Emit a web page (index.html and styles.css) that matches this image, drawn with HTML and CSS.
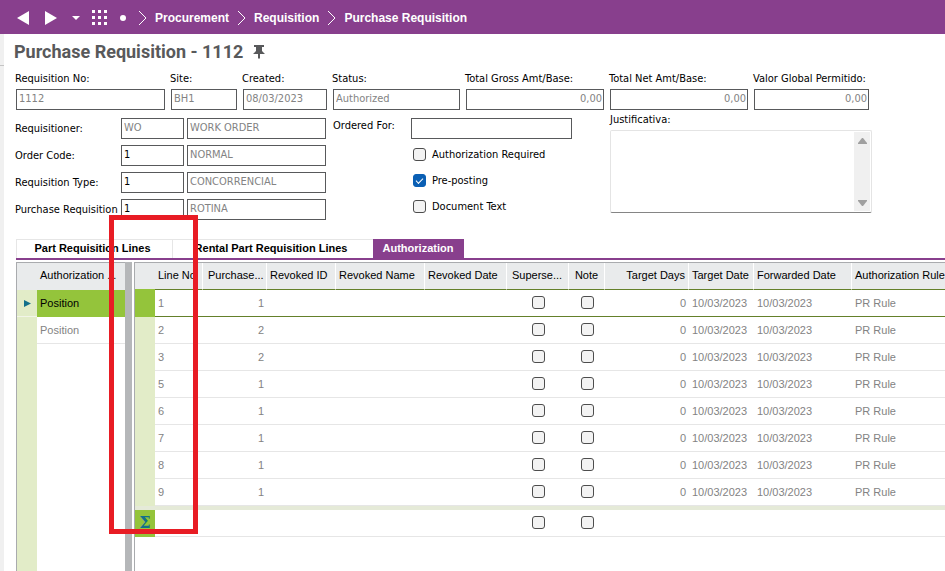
FILE: index.html
```html
<!DOCTYPE html>
<html lang="en">
<head>
<meta charset="utf-8">
<title>Purchase Requisition - 1112</title>
<link rel="stylesheet" href="styles.css">
</head>
<body>
<header class="topbar">
  <button class="nav-btn" aria-label="Back"><svg width="12" height="14" viewBox="0 0 12 14"><path d="M12 0V14L0 7Z"/></svg></button>
  <button class="nav-btn" aria-label="Forward"><svg width="12" height="14" viewBox="0 0 12 14"><path d="M0 0V14L12 7Z"/></svg></button>
  <button class="nav-btn" aria-label="History"><svg width="8" height="4" viewBox="0 0 8 4"><path d="M0 0H8L4 4Z"/></svg></button>
  <button class="nav-btn" aria-label="Apps"><svg width="15" height="15" viewBox="0 0 15 15"><path d="M0 0h3v3H0zM6 0h3v3H6zM12 0h3v3h-3zM0 6h3v3H0zM6 6h3v3H6zM12 6h3v3h-3zM0 12h3v3H0zM6 12h3v3H6zM12 12h3v3h-3z"/></svg></button>
  <span class="dot"></span>
  <nav class="crumbs" aria-label="Breadcrumb">
    <svg class="chev" width="9" height="16" viewBox="0 0 9 16"><path d="M1 1L8 8L1 15"/></svg>
    <a href="#procurement">Procurement</a>
    <svg class="chev" width="9" height="16" viewBox="0 0 9 16"><path d="M1 1L8 8L1 15"/></svg>
    <a href="#requisition">Requisition</a>
    <svg class="chev" width="9" height="16" viewBox="0 0 9 16"><path d="M1 1L8 8L1 15"/></svg>
    <a href="#purchase-requisition">Purchase Requisition</a>
  </nav>
</header>
<div class="body">
  <div class="gutter"><div class="gutter-top"></div></div>
  <main class="page">
    <div class="title-row">
      <h1>Purchase Requisition - 1112</h1>
      <svg width="12" height="14" viewBox="0 0 12 14"><path d="M1 0H11V2H9V6L12 9H7V13L6 14L5 13V9H0L3 6V2H1Z" fill="#58595b"/></svg>
    </div>

    <form class="form">
      <div class="summary">
        <div class="field"><label for="no">Requisition No:</label><input id="no" value="1112" readonly></div>
        <div class="field"><label for="site">Site:</label><input id="site" value="BH1" readonly></div>
        <div class="field"><label for="created">Created:</label><input id="created" value="08/03/2023" readonly></div>
        <div class="field"><label for="status">Status:</label><input id="status" value="Authorized" readonly></div>
        <div class="field"><label for="gross">Total Gross Amt/Base:</label><input id="gross" class="num" value="0,00" readonly></div>
        <div class="field"><label for="net">Total Net Amt/Base:</label><input id="net" class="num" value="0,00" readonly></div>
        <div class="field"><label for="valor">Valor Global Permitido:</label><input id="valor" class="num" value="0,00" readonly></div>
      </div>
      <div class="details">
        <div class="codes">
          <label for="requisitioner">Requisitioner:</label><input id="requisitioner" value="WO" readonly><input class="name" aria-label="Requisitioner name" value="WORK ORDER" readonly>
          <label for="order">Order Code:</label><input id="order" class="edit" value="1"><input class="name" aria-label="Order code name" value="NORMAL" readonly>
          <label for="type">Requisition Type:</label><input id="type" class="edit" value="1"><input class="name" aria-label="Requisition type name" value="CONCORRENCIAL" readonly>
          <label for="prf">Purchase Requisition F</label><input id="prf" class="edit" value="1"><input class="name" aria-label="Purchase requisition name" value="ROTINA" readonly>
        </div>
        <div class="options">
          <div class="ordered"><label for="for">Ordered For:</label><input id="for" class="edit"></div>
          <label class="check"><input type="checkbox">Authorization Required</label>
          <label class="check"><input type="checkbox" checked>Pre-posting</label>
          <label class="check"><input type="checkbox">Document Text</label>
        </div>
        <div class="just">
          <label for="just">Justificativa:</label>
          <div class="memo">
            <textarea id="just"></textarea>
            <div class="scroll">
              <svg width="9" height="6" viewBox="0 0 9 6"><path d="M4 0H5L9 5V6H0V5Z"/></svg>
              <svg width="9" height="6" viewBox="0 0 9 6"><path d="M4 6H5L9 1V0H0V1Z"/></svg>
            </div>
          </div>
        </div>
      </div>
    </form>

    <div class="tabs" role="tablist">
      <button role="tab" class="tab">Part Requisition Lines</button>
      <button role="tab" class="tab tab-wide">Rental Part Requisition Lines</button>
      <button role="tab" class="tab active" aria-selected="true">Authorization</button>
    </div>

    <div class="panes">
      <section class="pane pane-left">
        <table>
          <colgroup><col class="c-mark"><col></colgroup>
          <thead><tr><th></th><th>Authorization ...</th></tr></thead>
          <tbody>
            <tr class="current"><td class="mark"><svg width="7" height="7" viewBox="0 0 7 7"><path d="M0 0L7 3.500L0 7Z" fill="#12708a"/></svg></td><td>Position</td></tr>
            <tr><td class="mark"></td><td>Position</td></tr>
          </tbody>
        </table>
        <div class="mark-fill"></div>
      </section>
      <div class="splitter"></div>
      <section class="pane pane-right">
        <table>
          <colgroup><col class="c-mark"><col class="c-line"><col class="c-purch"><col class="c-id"><col class="c-name"><col class="c-date"><col class="c-sup"><col class="c-note"><col class="c-days"><col class="c-tdate"><col class="c-fdate"><col></colgroup>
          <thead><tr><th></th><th>Line No</th><th class="pad">Purchase...</th><th>Revoked ID</th><th>Revoked Name</th><th>Revoked Date</th><th class="pad">Superse...</th><th class="mid">Note</th><th class="num">Target Days</th><th>Target Date</th><th>Forwarded Date</th><th>Authorization Rule</th></tr></thead>
          <tbody id="lines"></tbody>
        </table>
      </section>
    </div>
    <div class="highlight"></div>
  </main>
</div>
<script src="lines.js"></script>
</body>
</html>
```

FILE: styles.css
```css
* { box-sizing: border-box; }
body {
  margin: 0;
  min-height: 100vh;
  display: flex;
  flex-direction: column;
  background: #fff;
  color: #000;
  font: 11px/15px "DejaVu Sans Condensed", Tahoma, sans-serif;
  overflow: hidden;
}
button, input, textarea { font: inherit; color: inherit; margin: 0; }

.topbar {
  height: 34px;
  padding: 1px 0 0 17px;
  display: flex;
  align-items: center;
  background: #883f8d;
  color: #fff;
  font: bold 12px/16px "Liberation Sans", Arial, sans-serif;
}
.nav-btn { display: flex; padding: 0; border: 0; background: none; margin-right: 16px; }
.nav-btn svg { fill: #fff; }
.nav-btn:nth-child(3) { margin-right: 12px; margin-left: -1px; }
.nav-btn:nth-child(4) { margin-right: 13px; }
.dot { width: 6px; height: 6px; border-radius: 50%; background: #fff; margin-right: 12px; }
.crumbs { display: flex; align-items: center; gap: 8px; }
.crumbs a { color: #fff; text-decoration: none; }
.chev path { fill: none; stroke: #fff; stroke-width: 1; }

.body { flex: 1; display: flex; }
.gutter { width: 4px; background: #f0f0f0; }
.gutter-top { height: 32px; border-bottom: 1px solid #c4c4c4; }
.page { flex: 1; min-width: 0; padding-left: 12px; display: flex; flex-direction: column; position: relative; }

.title-row { display: flex; align-items: center; gap: 10px; height: 36px; }
h1 { margin: 0 0 0 -2px; color: #58595b; font: bold 18px/24px Roboto, "Franklin Gothic Demi Cond", sans-serif; }

.form input:not([type]), .memo {
  border: 1px solid #58595b;
  background: #fff;
}
.form input:not([type]) {
  width: 100%;
  min-width: 0;
  height: 21px;
  padding: 0 1px 2px 2px;
  color: #838383;
  outline: 0;
}
.form input.edit:not([type]) { color: #000; }
.form input.num { text-align: right; }
.summary { display: grid; grid-template-columns: 149px 66px 84px 127px 138px 138px 115px; gap: 6px; }
.field { display: flex; flex-direction: column; gap: 3px; white-space: nowrap; }
.field label { margin-left: -1px; }
.form { padding-top: 1px; }

.details { display: grid; grid-template-columns: 317px 277px 262px; }
.codes { display: grid; grid-template-columns: 105px 63px 142px; row-gap: 6px; align-items: center; align-self: start; white-space: nowrap; padding-top: 8px; }
.codes label { margin-left: -1px; }
.codes input { position: relative; }
.codes .name { justify-self: end; max-width: 139px; }
.options { display: flex; flex-direction: column; gap: 5px; padding-top: 8px; }
.ordered { display: grid; grid-template-columns: 78px 161px; }
.check { display: flex; align-items: center; gap: 6px; height: 21px; padding-left: 80px; }
.just { display: flex; flex-direction: column; gap: 3px; padding-top: 2px; }
.memo { display: flex; height: 83px; border-color: #e4e4e4; border-bottom-color: #858585; border-radius: 2px; padding: 1px; }
textarea { flex: 1; min-width: 0; border: 0; padding: 2px; resize: none; outline: 0; background: transparent; }
.scroll { width: 16px; background: #f0f0f0; display: flex; flex-direction: column; align-items: center; justify-content: space-between; padding: 6px 0 5px; }
.scroll svg { fill: #a0a0a0; }

input[type="checkbox"] {
  appearance: none;
  flex: none;
  width: 13px;
  height: 13px;
  border: 1px solid #4d4d4d;
  border-radius: 3px;
  background: #f3f3f3;
}
input[type="checkbox"]:checked {
  border-color: #0a5fb4;
  background: #0a5fb4;
  display: flex;
  align-items: center;
  justify-content: center;
}
input[type="checkbox"]:checked::before {
  content: "";
  width: 6px;
  height: 3px;
  margin-bottom: 2px;
  border: solid #fff;
  border-width: 0 0 1px 1px;
  transform: rotate(-45deg);
}

.tabs { display: flex; margin-top: 19px; border-bottom: 2px solid #883f8d; }
.tab {
  height: 19px;
  width: 156px;
  padding: 0 4px 1px 0;
  border: 1px solid #e6e6e6;
  border-width: 1px 0 0 1px;
  background: #fff;
  white-space: nowrap;
  font: bold 11px/15px "Liberation Sans", Arial, sans-serif;
}
.tab-wide { width: 201px; }
.tab.active { width: 91px; padding-right: 1px; border: 0; background: #883f8d; color: #fff; }

.panes { flex: 1; display: flex; margin-top: 2px; font: 11px/15px "Liberation Sans", Arial, sans-serif; }
.pane { border: solid #a9abae; border-width: 1px 0 0 1px; display: flex; flex-direction: column; min-width: 0; overflow: hidden; }
.pane-left { width: 109px; }
.pane-right { flex: 1; }
.splitter { width: 7px; background: #b5b7b9; margin-right: 2px; }
table { width: 100%; table-layout: fixed; border-collapse: separate; border-spacing: 0; }
.c-mark { width: 20px; }
.c-line { width: 48px; }
.c-purch { width: 64px; }
.c-id { width: 69px; }
.c-name { width: 89px; }
.c-date { width: 82px; }
.c-sup { width: 62px; }
.c-note { width: 36px; }
.c-days { width: 84px; }
.c-tdate { width: 65px; }
.c-fdate { width: 98px; }
th, td { height: 27px; padding: 0 3px; text-align: left; font-weight: normal; white-space: nowrap; overflow: hidden; }
th { padding-bottom: 2px; background: #e9ebec; border-right: 1px solid #fff; border-bottom: 1px solid #e9ebec; }
th:first-child, .pane th:last-child { border-right: 0; }
.pane th:last-child { padding-right: 0; }
th.pad { padding-left: 5px; }
td { color: #838383; border-bottom: 1px solid #e6e6e6; }
td.mark { padding: 0; background: #e2ecc8; border-bottom-color: #e2ecc8; text-align: center; }
.num { text-align: right; }
.mid { text-align: center; }
td.mid { padding-bottom: 2px; }
td input[type="checkbox"] { display: block; margin: 0 auto; }
.pane-left .current td:last-child { background: #94c43b; color: #000; border-color: #94c43b; }
.pane-left .current td.mark { border-bottom-color: #f2f5e8; }
.mark-fill { flex: 1; width: 20px; background: #e2ecc8; }
.pane-right thead th { border-bottom-color: #64802a; }
.pane-right thead th:first-child { border-bottom-color: #94c43b; }
.pane-right .current td { border-bottom-color: #64802a; }
.pane-right .current td.mark, .sum td.mark { background: #94c43b; border-bottom-color: #94c43b; }
.band td { height: 4px; padding: 0; background: #e5ead8; border: 0; line-height: 0; }
.sum td.mark { color: #12708a; font: bold 16px/20px "DejaVu Serif", serif; }

.highlight {
  position: absolute;
  left: 105px;
  top: 181px;
  width: 89px;
  height: 319px;
  border: 5px solid #e81c24;
  pointer-events: none;
}
```

FILE: lines.js
```js
const lines = [[1, 1], [2, 2], [3, 2], [5, 1], [6, 1], [7, 1], [8, 1], [9, 1]];
const box = (name) => `<td class="mid"><input type="checkbox" aria-label="${name}"></td>`;
const blank = "<td></td>";

const rows = lines.map(([line, seq], i) => `
  <tr class="${i === 0 ? "current" : ""}">
    <td class="mark"></td><td>${line}</td><td class="num">${seq}</td>
    ${blank.repeat(3)}${box("Superseded")}${box("Note")}
    <td class="num">0</td><td>10/03/2023</td><td>10/03/2023</td><td>PR Rule</td>
  </tr>`);

rows.push('<tr class="band"><td colspan="12"></td></tr>');
rows.push(`<tr class="sum"><td class="mark">Σ</td>${blank.repeat(5)}${box("Superseded")}${box("Note")}${blank.repeat(4)}</tr>`);
document.getElementById("lines").innerHTML = rows.join("");
```
